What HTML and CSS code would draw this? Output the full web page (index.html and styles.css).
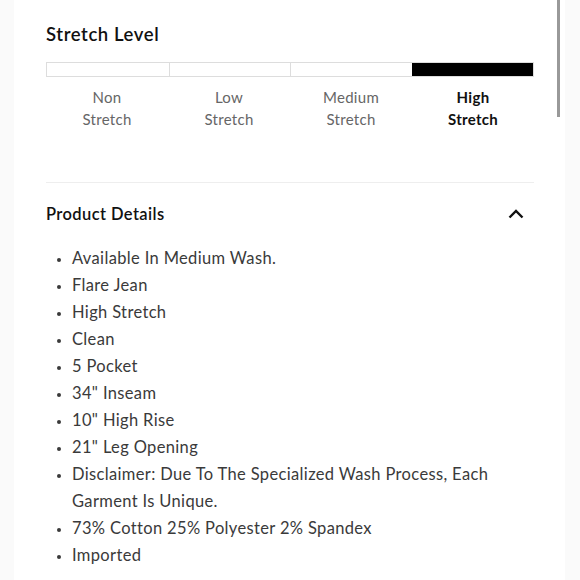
FILE: index.html
```html
<!DOCTYPE html>
<html lang="en">
<head>
<meta charset="utf-8">
<title>Product</title>
<link rel="stylesheet" href="styles.css">
</head>
<body>
<div class="panel">
  <section class="stretch">
    <h2 class="title">Stretch Level</h2>
    <div class="bar">
      <div class="seg"></div>
      <div class="seg"></div>
      <div class="seg"></div>
      <div class="seg on"></div>
    </div>
    <div class="labels">
      <div class="lab">Non<br>Stretch</div>
      <div class="lab">Low<br>Stretch</div>
      <div class="lab">Medium<br>Stretch</div>
      <div class="lab on">High<br>Stretch</div>
    </div>
  </section>
  <hr class="divider">
  <section class="details">
    <div class="head">
      <h3 class="htitle">Product Details</h3>
      <svg class="chev" width="16" height="10" viewBox="0 0 16 10"><path d="M1.5 8.5 L8 2 L14.5 8.5" fill="none" stroke="#111" stroke-width="2.4"/></svg>
    </div>
    <ul class="list">
      <li>Available In Medium Wash.</li>
      <li>Flare Jean</li>
      <li>High Stretch</li>
      <li>Clean</li>
      <li>5 Pocket</li>
      <li>34" Inseam</li>
      <li>10" High Rise</li>
      <li>21" Leg Opening</li>
      <li>Disclaimer: Due To The Specialized Wash Process, Each Garment Is Unique.</li>
      <li>73% Cotton 25% Polyester 2% Spandex</li>
      <li>Imported</li>
    </ul>
  </section>
  <div class="scroll"></div>
</div>
</body>
</html>
```
FILE: styles.css
```css
* { box-sizing: border-box; }
html, body { margin: 0; padding: 0; }
body {
  background: #fafafa;
  font-family: Lato, "Liberation Sans", sans-serif;
  color: #111;
  height: 580px;
  overflow: hidden;
}
.panel {
  position: relative;
  margin-left: 14px;
  width: 551px;
  height: 580px;
  background: #fff;
  padding: 23px 0 0 32px;
}
.stretch { width: 488px; }
.title {
  margin: 0;
  font-size: 18.5px;
  font-weight: 600;
  line-height: 22px;
  letter-spacing: 0.6px;
}
.bar {
  margin-top: 17px;
  display: grid;
  grid-template-columns: repeat(4, 1fr);
  height: 15px;
  border: 1px solid #ddd;
}
.seg { border-left: 1px solid #ddd; background: #fff; }
.seg:first-child { border-left: none; }
.seg.on { background: #000; border-left-color: #000; }
.labels {
  margin-top: 9px;
  display: grid;
  grid-template-columns: repeat(4, 1fr);
  text-align: center;
  font-size: 15px;
  line-height: 22px;
  letter-spacing: 0.3px;
  color: #666;
}
.lab.on { color: #111; font-weight: 700; }
.divider {
  width: 488px;
  margin: 52px 0 0 0;
  border: none;
  border-top: 1px solid #eee;
}
.details { width: 488px; }
.head {
  display: flex;
  justify-content: space-between;
  align-items: center;
  margin-top: 20px;
  padding-right: 10px;
}
.htitle {
  margin: 0;
  font-size: 16.5px;
  font-weight: 600;
  line-height: 22px;
  letter-spacing: 0.4px;
}
.chev { display: block; }
.list {
  margin: 20px 0 0 0;
  padding: 0 0 0 26px;
  font-size: 16.5px;
  line-height: 27px;
  letter-spacing: 0.35px;
  color: #3a3a3a;
}
.list li::marker { font-size: 12px; }
.scroll {
  position: absolute;
  top: 0;
  left: 543px;
  width: 3px;
  height: 117px;
  background: #999;
}
```
